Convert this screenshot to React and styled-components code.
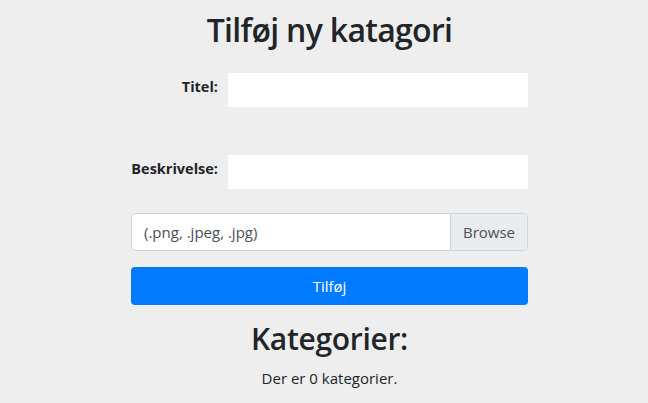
import React from "react";
import styled, { createGlobalStyle } from "styled-components";

const Global = createGlobalStyle`
  html, body { margin: 0; padding: 0; background: #eeeeee; }
  body { font-family: "Open Sans", "Noto Sans", sans-serif; color: #212529; }
`;

const Page = styled.div`
  width: 397px;
  margin-left: 131px;
  display: flex;
  flex-direction: column;
`;

const Title = styled.h1`
  margin: 10px 0 0;
  font-size: 32px;
  font-weight: 600;
  letter-spacing: -0.7px;
  line-height: 40px;
  text-align: center;
`;

const Row = styled.div`
  display: grid;
  grid-template-columns: 87px 300px;
  column-gap: 10px;
  margin-top: ${(p) => p.$mt}px;
`;

const Label = styled.label`
  text-align: right;
  font-weight: 700;
  font-size: 14.5px;
  line-height: 20px;
  padding-top: ${(p) => p.$pt}px;
`;

const TextInput = styled.input`
  height: 34px;
  border: none;
  background: #fff;
  box-sizing: border-box;
  outline: none;
  padding: 0 8px;
`;

const FileGroup = styled.div`
  display: flex;
  height: 38px;
  box-sizing: border-box;
  border: 1px solid #ced4da;
  border-radius: 4px;
  background: #fff;
  margin-top: 24px;
  overflow: hidden;
  font-size: 15px;
`;

const FileText = styled.div`
  flex: 1;
  display: flex;
  align-items: center;
  padding-left: 12px;
  color: #495057;
`;

const Browse = styled.div`
  width: 76px;
  display: flex;
  align-items: center;
  justify-content: center;
  background: #e9ecef;
  border-left: 1px solid #ced4da;
  color: #495057;
`;

const Submit = styled.button`
  margin-top: 16px;
  height: 38px;
  border: none;
  border-radius: 4px;
  background: #007bff;
  color: #fff;
  font-family: inherit;
  font-size: 15px;
  cursor: pointer;
`;

const SubTitle = styled.h2`
  margin: 15px 0 0;
  font-size: 30px;
  font-weight: 600;
  letter-spacing: -0.3px;
  line-height: 38px;
  text-align: center;
`;

const Info = styled.p`
  margin: 9px 0 0;
  font-size: 15px;
  line-height: 22px;
  text-align: center;
`;

export default function App() {
  return (
    <>
      <Global />
      <Page>
        <Title>Tilføj ny katagori</Title>
        <Row $mt={23}>
          <Label $pt={4}>Titel:</Label>
          <TextInput />
        </Row>
        <Row $mt={48}>
          <Label $pt={4}>Beskrivelse:</Label>
          <TextInput />
        </Row>
        <FileGroup>
          <FileText>(.png, .jpeg, .jpg)</FileText>
          <Browse>Browse</Browse>
        </FileGroup>
        <Submit>Tilføj</Submit>
        <SubTitle>Kategorier:</SubTitle>
        <Info>Der er 0 kategorier.</Info>
      </Page>
    </>
  );
}
